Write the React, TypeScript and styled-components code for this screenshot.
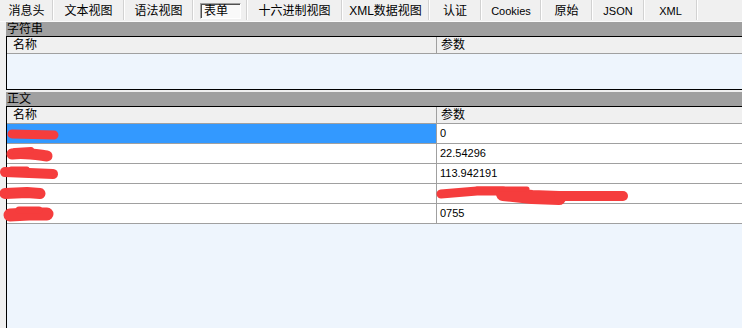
import React from 'react';
import styled, { createGlobalStyle } from 'styled-components';

const GlobalStyle = createGlobalStyle`
  html, body {
    margin: 0;
    padding: 0;
    background: #f0f0f0;
  }
  body {
    font-family: "Liberation Sans", "Noto Sans CJK SC", sans-serif;
    font-size: 12px;
    color: #000;
  }
`;

const Page = styled.div`
  width: 742px;
  height: 328px;
  overflow: hidden;
  display: flex;
  flex-direction: column;
  background: #f0f0f0;
`;

const TabBar = styled.div`
  display: flex;
  height: 22px;
  box-sizing: border-box;
  border-bottom: 1px solid #fbfbfb;
`;

const Tab = styled.div<{ $w: number; $latin?: boolean }>`
  position: relative;
  width: ${({ $w }) => $w}px;
  display: flex;
  align-items: center;
  justify-content: center;
  font-size: ${({ $latin }) => ($latin ? '11px' : '12px')};
  line-height: 14px;
  white-space: nowrap;

  &::after {
    content: '';
    position: absolute;
    right: 0;
    top: 0;
    height: 20px;
    width: 1px;
    background: #d2d2d2;
    box-shadow: 1px 0 0 #ffffff;
  }
`;

const Sunken = styled.span`
  width: 41px;
  height: 16px;
  box-sizing: border-box;
  display: flex;
  align-items: center;
  padding-left: 3px;
  margin-left: 1px;
  background: #f9f9f9;
  border-top: 1px solid #a0a0a0;
  border-left: 1px solid #a0a0a0;
  border-right: 1px solid #ffffff;
  border-bottom: 1px solid #ffffff;
  box-shadow: inset 1px 1px 0 #505050;
`;

const Content = styled.div`
  flex: 1;
  display: flex;
  flex-direction: column;
  padding-left: 6px;
  min-height: 0;
`;

const Section = styled.section<{ $grow?: boolean }>`
  display: flex;
  flex-direction: column;
  flex: ${({ $grow }) => ($grow ? 1 : 'none')};
  & + & {
    margin-top: 2px;
  }
`;

const Band = styled.div`
  height: 14px;
  line-height: 14px;
  background: #a0a0a0;
  padding-left: 1px;
  font-size: 12px;
`;

const Panel = styled.div<{ $closed?: boolean }>`
  flex: 1;
  display: flex;
  flex-direction: column;
  border-top: 1px solid #000;
  border-left: 1px solid #000;
  border-bottom: ${({ $closed }) => ($closed ? '1px solid #000' : 'none')};
  background: #eef5fd;
`;

const Columns = styled.div`
  display: grid;
  grid-template-columns: 429px 1fr;
`;

const Header = styled(Columns)`
  height: 17px;
  box-sizing: border-box;
  background: #f0f0f0;
  border-bottom: 1px solid #a0a0a0;
  line-height: 16px;
  font-size: 12px;
`;

const HeadCell = styled.div`
  padding-left: 6px;
  & + & {
    border-left: 1px solid #a0a0a0;
    padding-left: 4px;
  }
`;

const Body = styled.div<{ $h?: number }>`
  height: ${({ $h }) => ($h ? `${$h}px` : 'auto')};
`;

const Row = styled(Columns)`
  position: relative;
  height: 20px;
  box-sizing: border-box;
  border-bottom: 1px solid #a0a0a0;
  font-size: 11px;
  line-height: 19px;
`;

const Cell = styled.div<{ $selected?: boolean }>`
  background: ${({ $selected }) => ($selected ? '#3399ff' : '#ffffff')};
  padding-left: 6px;
  overflow: hidden;
  white-space: nowrap;
  & + & {
    border-left: 1px solid #a0a0a0;
    padding-left: 3px;
  }
`;

const Blots = styled.svg`
  position: absolute;
  left: 0;
  top: 0;
  width: 735px;
  height: 20px;
  overflow: visible;
  pointer-events: none;
  z-index: 1;
`;

type Stroke = { d: string; w: number };

const tabs = [
  { label: '消息头', w: 53 },
  { label: '文本视图', w: 71 },
  { label: '语法视图', w: 69 },
  { label: '表单', w: 54, active: true },
  { label: '十六进制视图', w: 95 },
  { label: 'XML数据视图', w: 87 },
  { label: '认证', w: 52 },
  { label: 'Cookies', w: 60, latin: true },
  { label: '原始', w: 51 },
  { label: 'JSON', w: 52, latin: true },
  { label: 'XML', w: 53, latin: true },
];

// red marker strokes that hide the redacted names
const rows: { value: string; selected?: boolean; blots: Stroke[] }[] = [
  {
    value: '0',
    selected: true,
    blots: [{ d: 'M5 10 L26 10.5 L47 11', w: 9 }],
  },
  {
    value: '22.54296',
    blots: [
      { d: 'M5 10 C18 8 32 11 40 12', w: 11 },
      { d: 'M8 7 L24 6', w: 6 },
    ],
  },
  {
    value: '113.942191',
    blots: [
      { d: 'M-2 8 L22 9 L46 10', w: 10 },
      { d: 'M4 5 L20 5', w: 5 },
    ],
  },
  {
    value: '',
    blots: [
      { d: 'M-2 9.5 L20 8.5 L33 9.5', w: 11 },
      { d: 'M434 10 L470 7 L496 7', w: 9 },
      { d: 'M496 10 L525 13 L552 14', w: 14 },
      { d: 'M552 12 L590 12 L616 12', w: 10 },
      { d: 'M470 5 L520 5', w: 5 },
    ],
  },
  {
    value: '0755',
    blots: [
      { d: 'M3 11 L22 10 L40 10', w: 13 },
      { d: 'M12 6 L32 6', w: 7 },
    ],
  },
];

const Blot: React.FC<{ strokes: Stroke[] }> = ({ strokes }) => (
  <Blots>
    {strokes.map((s, i) => (
      <path
        key={i}
        d={s.d}
        fill="none"
        stroke="#f53d3d"
        strokeWidth={s.w}
        strokeLinecap="round"
        strokeLinejoin="round"
      />
    ))}
  </Blots>
);

const TableHeader = () => (
  <Header>
    <HeadCell>名称</HeadCell>
    <HeadCell>参数</HeadCell>
  </Header>
);

export default function App() {
  return (
    <Page>
      <GlobalStyle />
      <TabBar>
        {tabs.map((t) => (
          <Tab key={t.label} $w={t.w} $latin={t.latin}>
            {t.active ? <Sunken>{t.label}</Sunken> : t.label}
          </Tab>
        ))}
      </TabBar>
      <Content>
        <Section>
          <Band>字符串</Band>
          <Panel $closed>
            <TableHeader />
            <Body $h={35} />
          </Panel>
        </Section>
        <Section $grow>
          <Band>正文</Band>
          <Panel>
            <TableHeader />
            <Body>
              {rows.map((r, i) => (
                <Row key={i}>
                  <Cell $selected={r.selected} />
                  <Cell>{r.value}</Cell>
                  <Blot strokes={r.blots} />
                </Row>
              ))}
            </Body>
          </Panel>
        </Section>
      </Content>
    </Page>
  );
}
